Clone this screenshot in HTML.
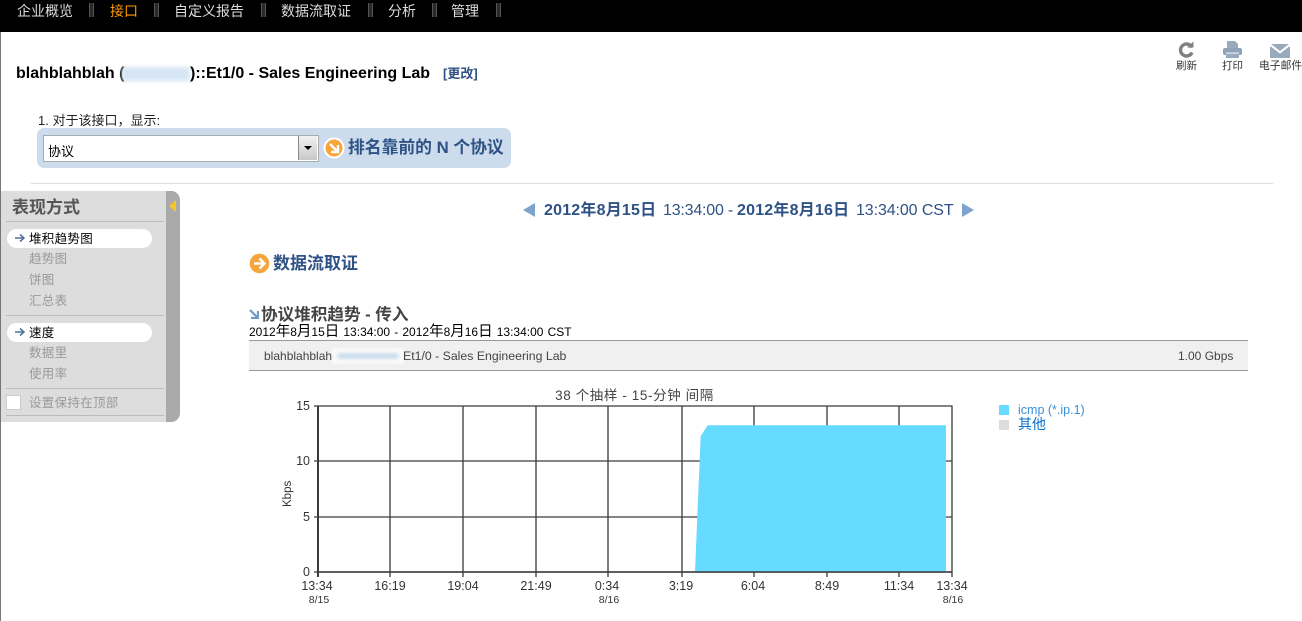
<!DOCTYPE html>
<html lang="zh"><head><meta charset="utf-8"><title>协议堆积趋势</title>
<style>
html,body{margin:0;padding:0;background:#fff;width:1302px;height:621px;overflow:hidden}
body{position:relative;font-family:"Liberation Sans","Noto Sans CJK SC",sans-serif;color:#000}
.a{position:absolute;white-space:nowrap;line-height:1}
.nav{top:3px;font-size:14px;color:#ddd;line-height:16px}
.sep{position:absolute;top:3px;width:3px;height:14px;background:#2a2a2a;border:1px solid #555;border-width:0 1px}
.si{left:29px;font-size:12.5px;color:#999;letter-spacing:.3px}
.hr{position:absolute;left:6px;width:158px;height:1px;background:#bbb}
.pill{position:absolute;left:7px;width:145px;height:19px;background:#fff;border-radius:10px}
.c{font-size:14.5px;line-height:0}
</style></head><body>
<div style="position:absolute;left:0;top:0;width:1302px;height:32px;background:#000"></div>
<div style="position:absolute;left:0;top:32px;width:1px;height:589px;background:#777"></div>

<div class="a nav" style="left:17px">企业概览</div><div class="sep" style="left:89px"></div>
<div class="a nav" style="left:110px;color:#f90">接口</div><div class="sep" style="left:154px"></div>
<div class="a nav" style="left:174px">自定义报告</div><div class="sep" style="left:261px"></div>
<div class="a nav" style="left:281px">数据流取证</div><div class="sep" style="left:368px"></div>
<div class="a nav" style="left:388px">分析</div><div class="sep" style="left:432px"></div>
<div class="a nav" style="left:451px">管理</div><div class="sep" style="left:496px"></div>

<div class="a" style="left:16px;top:65px;font-size:16px;font-weight:bold;line-height:18px">blahblahblah (</div>
<div style="position:absolute;left:122px;top:67px;width:68px;height:14px;background:#d6e6f5;filter:blur(2px)"></div>
<div class="a" style="left:190px;top:65px;font-size:16px;font-weight:bold;line-height:18px">)::Et1/0 - Sales Engineering Lab</div>
<div class="a" style="left:443px;top:66px;font-size:13px;font-weight:bold;color:#2f5286;line-height:15px">[更改]</div>

<svg style="position:absolute;left:1176px;top:40px" width="20" height="20" viewBox="0 0 20 20"><path d="M16 7.500A6 6 0 1 0 16 12.500" fill="none" stroke="#808080" stroke-width="3.400"/><path d="M11 7.500H17.500V1.500z" fill="#808080"/></svg>
<svg style="position:absolute;left:1222px;top:40px" width="21" height="20" viewBox="0 0 21 20"><path d="M5 1H13L16 4V9H5z" fill="#9aaabd"/><rect x="1" y="8" width="19" height="7" rx="2" fill="#8ea2b8"/><rect x="4" y="14" width="13" height="4" fill="#9aaabd"/><rect x="4" y="12.500" width="13" height="1.200" fill="#e8edf2"/></svg>
<svg style="position:absolute;left:1270px;top:43px" width="20" height="16" viewBox="0 0 20 16"><path d="M1 1H19L10 8z" fill="#9aaabd"/><path d="M0 3L10 10.500L20 3V15H0z" fill="#9aaabd"/></svg>
<div class="a" style="left:1176px;top:61px;font-size:10.500px;color:#333;line-height:11px">刷新</div>
<div class="a" style="left:1222px;top:61px;font-size:10.500px;color:#333;line-height:11px">打印</div>
<div class="a" style="left:1259px;top:61px;font-size:10.800px;color:#333;line-height:11px">电子邮件</div>

<div class="a" style="left:38px;top:114px;font-size:13px;color:#222;line-height:14px">1. 对于该接口，显示:</div>
<div style="position:absolute;left:37px;top:128px;width:474px;height:40px;background:#ccdcec;border-radius:7px"></div>
<div style="position:absolute;left:43px;top:135px;width:274px;height:25px;background:#fff;border:1px solid #a5acb2"></div>
<div class="a" style="left:48px;top:145px;font-size:13px;line-height:14px">协议</div>
<div style="position:absolute;left:298px;top:136px;width:18px;height:24px;background:linear-gradient(#f2f2f2,#c8c8c8);border-left:1px solid #888"></div>
<svg style="position:absolute;left:303px;top:145px" width="10" height="6"><path d="M1 1H9L5 5z" fill="#000"/></svg>
<svg style="position:absolute;left:323px;top:137px" width="22" height="22" viewBox="0 0 22 22"><circle cx="11" cy="11" r="10.500" fill="#fff"/><circle cx="11" cy="11" r="8.500" fill="#f6a53d"/><path d="M7 7L14 14M15 8V15H8" fill="none" stroke="#fff" stroke-width="2.400"/></svg>
<div class="a" style="left:348px;top:138px;font-size:16.800px;font-weight:bold;color:#2f5286;line-height:19px">排名靠前的 N 个协议</div>
<div style="position:absolute;left:31px;top:183px;width:1242px;height:1px;background:#ddd"></div>

<div style="position:absolute;left:1px;top:191px;width:179px;height:231px;background:#ddd;border-radius:0 9px 9px 0;overflow:hidden"><div style="position:absolute;left:165px;top:0;width:14px;height:231px;background:#aaa"></div></div>
<svg style="position:absolute;left:169px;top:200px" width="7" height="12"><path d="M7 0V12L0 6z" fill="#f5c52c"/></svg>
<div class="a" style="left:12px;top:198px;font-size:17px;font-weight:bold;color:#555;line-height:19px">表现方式</div>
<div class="hr" style="top:221px"></div>
<div class="pill" style="top:229px"></div>
<svg style="position:absolute;left:15px;top:233px" width="10" height="10"><path d="M0 5H8M5 1.500L9 5L5 8.500" fill="none" stroke="#4f7199" stroke-width="1.500"/></svg>
<div class="a si" style="top:232px;color:#000;line-height:14px">堆积趋势图</div>
<div class="a si" style="top:252px;line-height:14px">趋势图</div>
<div class="a si" style="top:273px;line-height:14px">饼图</div>
<div class="a si" style="top:294px;line-height:14px">汇总表</div>
<div class="hr" style="top:315px"></div>
<div class="pill" style="top:323px"></div>
<svg style="position:absolute;left:15px;top:327px" width="10" height="10"><path d="M0 5H8M5 1.500L9 5L5 8.500" fill="none" stroke="#4f7199" stroke-width="1.500"/></svg>
<div class="a si" style="top:326px;color:#000;line-height:14px">速度</div>
<div class="a si" style="top:346px;line-height:14px">数据里</div>
<div class="a si" style="top:367px;line-height:14px">使用率</div>
<div class="hr" style="top:388px"></div>
<div style="position:absolute;left:6px;top:395px;width:13px;height:13px;background:#fff;border:1px solid #ccc"></div>
<div class="a si" style="top:396px;line-height:14px">设置保持在顶部</div>
<div class="hr" style="top:415px"></div>

<svg style="position:absolute;left:523px;top:203px" width="12" height="14"><path d="M12 0V14L0 7z" fill="#7ea3cc"/></svg>
<div class="a" style="left:544px;top:201px;font-size:16px;font-weight:bold;letter-spacing:.2px;color:#2f5286;line-height:19px">2012年8月15日</div>
<div class="a" style="left:663px;top:201px;font-size:16px;color:#2f5286;line-height:19px;letter-spacing:-.2px">13:34:00 -</div>
<div class="a" style="left:737px;top:201px;font-size:16px;font-weight:bold;letter-spacing:.2px;color:#2f5286;line-height:19px">2012年8月16日</div>
<div class="a" style="left:856px;top:201px;font-size:16px;color:#2f5286;line-height:19px;letter-spacing:-.1px">13:34:00 CST</div>
<svg style="position:absolute;left:962px;top:203px" width="12" height="14"><path d="M0 0V14L12 7z" fill="#7ea3cc"/></svg>

<svg style="position:absolute;left:249px;top:253px" width="21" height="21" viewBox="0 0 21 21"><circle cx="10.500" cy="10.500" r="9.800" fill="#f6a53d"/><path d="M5 10.500H15M10.500 5.500L15.500 10.500L10.500 15.500" fill="none" stroke="#fff" stroke-width="2.400"/></svg>
<div class="a" style="left:273px;top:254px;font-size:17px;font-weight:bold;color:#2f5286;line-height:19px">数据流取证</div>

<svg style="position:absolute;left:249px;top:309px" width="10" height="10"><path d="M1 1L8 8M9 2V9H2" fill="none" stroke="#6f9ac8" stroke-width="2.200"/></svg>
<div class="a" style="left:261px;top:305px;font-size:16.600px;font-weight:bold;color:#444;line-height:19px">协议堆积趋势 - 传入</div>
<div class="a" style="left:249px;top:325px;font-size:12px;line-height:15px;word-spacing:.8px">2012<span class="c">年</span>8<span class="c">月</span>15<span class="c">日</span> 13:34:00 - 2012<span class="c">年</span>8<span class="c">月</span>16<span class="c">日</span> 13:34:00 CST</div>

<div style="position:absolute;left:249px;top:340px;width:999px;height:29px;background:#f0f0f0;border-top:1px solid #999;border-bottom:1px solid #999"></div>
<div class="a" style="left:264px;top:349px;font-size:12px;color:#444;line-height:14px">blahblahblah</div>
<div style="position:absolute;left:333px;top:349px;width:70px;height:14px;background:#fff;filter:blur(1.500px)"></div>
<div style="position:absolute;left:337px;top:353px;width:62px;height:6px;background:#c6d8ea;filter:blur(2px)"></div>
<div class="a" style="left:403px;top:349px;font-size:12.300px;color:#444;line-height:14px">Et1/0 - Sales Engineering Lab</div>
<div class="a" style="left:1178px;top:349px;font-size:12px;color:#444;line-height:14px">1.00 Gbps</div>

<svg style="position:absolute;left:270px;top:380px" width="720" height="241" viewBox="270 380 720 241" font-family="Liberation Sans,Noto Sans CJK SC,sans-serif" fill="#333">
<g stroke="#3a3a3a" stroke-width="1.300" fill="none">
<path d="M318 406H952.500M318 461H952M318 517H952M318 572H952"/>
<path d="M390 406V577M463 406V577M536 406V577M608 406V577M682 406V577M754 406V577M827 406V577M899 406V577M952 406V577"/>
<path d="M318 406V577M314 406H318M314 461H318M314 517H318M314 572H318"/>
</g>
<path d="M318 406V577" stroke="#3a3a3a" stroke-width="2"/>
<path d="M695 572L700.700 436L707.700 425.300H946V572z" fill="#66dbff"/>
<path d="M318 572H952" stroke="#3a3a3a" stroke-width="1.500"/>
<text x="634.500" y="400" font-size="13.500" text-anchor="middle" fill="#444" letter-spacing=".6">38 个抽样 - 15-分钟 间隔</text>
<g font-size="12.500" text-anchor="end"><text x="310" y="410">15</text><text x="310" y="465">10</text><text x="310" y="521">5</text><text x="310" y="576">0</text></g>
<text transform="translate(291 507) rotate(-90)" font-size="11.500">Kbps</text>
<g font-size="12.500" text-anchor="middle">
<text x="317" y="590">13:34</text><text x="390" y="590">16:19</text><text x="463" y="590">19:04</text><text x="536" y="590">21:49</text><text x="607" y="590">0:34</text><text x="681" y="590">3:19</text><text x="753" y="590">6:04</text><text x="827" y="590">8:49</text><text x="899" y="590">11:34</text><text x="952" y="590">13:34</text></g>
<g font-size="10.500" text-anchor="middle"><text x="319" y="603">8/15</text><text x="609" y="603">8/16</text><text x="953" y="603">8/16</text></g>
</svg>

<div style="position:absolute;left:999px;top:405px;width:10px;height:10px;background:#66dbff"></div>
<div style="position:absolute;left:999px;top:420px;width:10px;height:10px;background:#ddd"></div>
<div class="a" style="left:1018px;top:403px;font-size:12.500px;color:#3a8fd8;line-height:14px">icmp (*.ip.1)</div>
<div class="a" style="left:1018px;top:416px;font-size:14px;color:#0a70c8;line-height:16px">其他</div>
</body></html>
